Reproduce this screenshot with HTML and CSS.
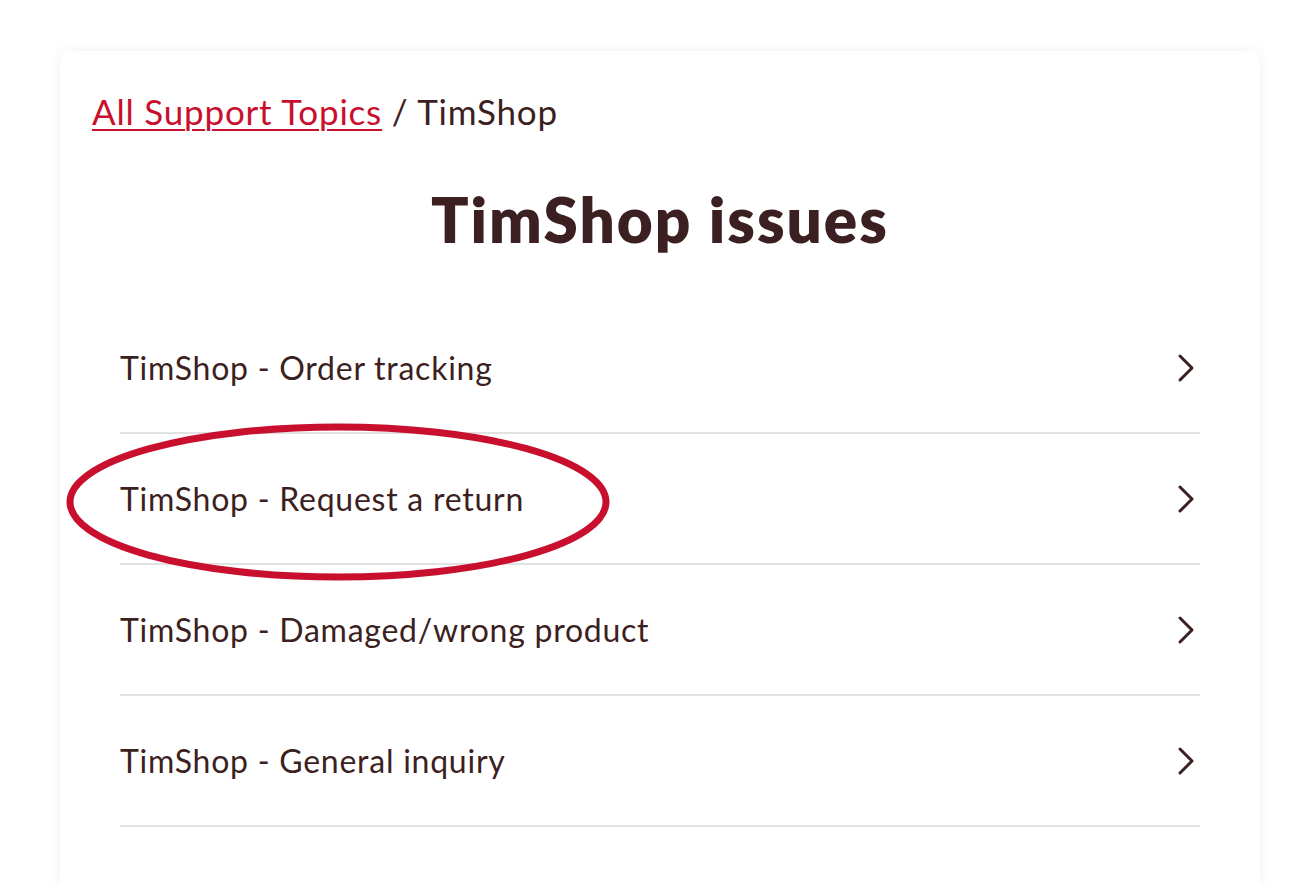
FILE: index.html
```html
<!DOCTYPE html>
<html>
<head>
<meta charset="utf-8">
<link rel="stylesheet" href="styles.css">
</head>
<body>
<main class="card">
  <nav class="crumbs"><a href="#" class="crumb-link">All Support Topics</a> / TimShop</nav>
  <h1 class="title">TimShop issues</h1>
  <ul class="topics">
    <li class="topic"><span>TimShop - Order tracking</span><svg class="chev" viewBox="0 0 20 30"><path d="M4 3 L16 15 L4 27"/></svg></li>
    <li class="topic highlighted"><span>TimShop - Request a return</span><svg class="chev" viewBox="0 0 20 30"><path d="M4 3 L16 15 L4 27"/></svg>
      <svg class="ring" viewBox="0 0 546 160"><ellipse cx="273" cy="80" rx="268" ry="75"/></svg></li>
    <li class="topic"><span>TimShop - Damaged/wrong product</span><svg class="chev" viewBox="0 0 20 30"><path d="M4 3 L16 15 L4 27"/></svg></li>
    <li class="topic"><span>TimShop - General inquiry</span><svg class="chev" viewBox="0 0 20 30"><path d="M4 3 L16 15 L4 27"/></svg></li>
  </ul>
</main>
</body>
</html>
```
FILE: styles.css
```css
html, body { margin: 0; background: #fff; }
body { font-family: Lato, "Open Sans", sans-serif; color: #3c1f21; height: 886px; overflow: hidden; }
.card {
  margin: 51px 0 0 60px;
  width: 1200px;
  height: 835px;
  background: #fff;
  border-radius: 10px 10px 0 0;
  box-shadow: 0 0 14px rgba(0,0,0,0.06);
  padding: 30px 32px 0;
  box-sizing: border-box;
}
.crumbs { font-size: 35px; line-height: 60px; letter-spacing: 0.8px; }
.crumb-link { color: #c8102e; text-decoration: underline; text-decoration-thickness: 2px; text-underline-offset: 4px; }
.title { font-size: 62px; font-weight: 800; text-align: center; margin: 38px 0 0; line-height: 80px; letter-spacing: 2px; }
.topics { list-style: none; margin: 44px 28px 0; padding: 0; }
.topic {
  position: relative;
  display: flex; align-items: center; justify-content: space-between;
  height: 129px;
  border-bottom: 2px solid #e2e2e2;
  font-size: 32px;
  letter-spacing: 0.75px;
}
.chev { width: 20px; height: 30px; margin-right: 4px; }
.chev path { fill: none; stroke: #3c1f21; stroke-width: 3; stroke-linecap: round; stroke-linejoin: round; }
.ring { position: absolute; left: -55px; top: -12px; width: 546px; height: 160px; overflow: visible; }
.ring ellipse { fill: none; stroke: #c8102e; stroke-width: 7; }
```
